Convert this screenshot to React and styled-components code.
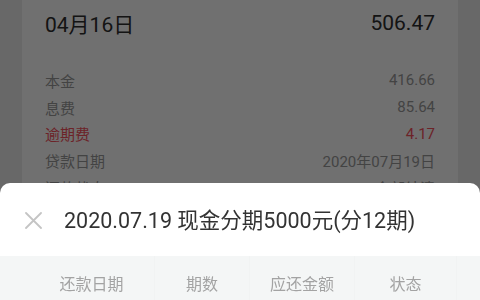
import React from "react";
import styled, { createGlobalStyle } from "styled-components";

const Global = createGlobalStyle`
  html, body { margin: 0; padding: 0; }
  body {
    width: 480px; height: 300px; overflow: hidden;
    background: #ececec;
    font-family: Roboto, "Noto Sans CJK SC", sans-serif;
  }
`;

const Page = styled.div`
  padding: 0 22px;
  height: 300px;
  overflow: hidden;
`;

const Card = styled.div`
  background: #ffffff;
  padding: 0 23px;
  height: 300px;
`;

const Headline = styled.div`
  display: flex;
  justify-content: space-between;
  align-items: center;
  height: 46px;
  font-size: 21px;
  font-weight: 400;
  color: #2e2e2e;
  margin-bottom: 21px;
`;

const Row = styled.div`
  display: flex;
  justify-content: space-between;
  align-items: center;
  height: 26.7px;
  font-size: 15px;
  color: ${(p) => (p.$alert ? "#f5505c" : "#9a9a9a")};
`;

const Overlay = styled.div`
  position: fixed;
  inset: 0;
  background: rgba(0, 0, 0, 0.56);
`;

const Sheet = styled.div`
  position: fixed;
  left: 0;
  right: 0;
  top: 183px;
  bottom: 0;
  background: #ffffff;
  border-radius: 10px 10px 0 0;
  overflow: hidden;
  display: flex;
  flex-direction: column;
`;

const TitleBar = styled.div`
  flex: none;
  display: flex;
  align-items: center;
  height: 73px;
  padding-left: 25px;
  gap: 22px;
`;

const Close = styled.svg`
  width: 17px;
  height: 17px;
  flex: none;
  margin-top: 2px;
`;

const Title = styled.div`
  font-size: 21.5px;
  color: #333333;
  white-space: nowrap;
  margin-top: -3px;
`;

const Header = styled.div`
  flex: none;
  display: grid;
  grid-template-columns: 126px 95px 105px 102px;
  padding-left: 29px;
  height: 54px;
  background: #f4f6f6;
`;

const HeadCell = styled.div`
  display: flex;
  align-items: center;
  justify-content: center;
  font-size: 16px;
  color: #a3a3a3;
  border-right: 1px solid #f1f3f3;
`;

const rows = [
  ["本金", "416.66"],
  ["息费", "85.64"],
  ["逾期费", "4.17", true],
  ["贷款日期", "2020年07月19日"],
  ["还款状态", "全部结清"],
];

export default function App() {
  return (
    <>
      <Global />
      <Page>
        <Card>
          <Headline>
            <span>04月16日</span>
            <span>506.47</span>
          </Headline>
          {rows.map(([l, v, a]) => (
            <Row key={l} $alert={a}>
              <span>{l}</span>
              <span>{v}</span>
            </Row>
          ))}
        </Card>
      </Page>
      <Overlay />
      <Sheet>
        <TitleBar>
          <Close viewBox="0 0 17 17">
            <path d="M1 1L16 16M16 1L1 16" stroke="#c4c4c4" strokeWidth="1.8" strokeLinecap="round" fill="none" />
          </Close>
          <Title>2020.07.19 现金分期5000元(分12期)</Title>
        </TitleBar>
        <Header>
          <HeadCell>还款日期</HeadCell>
          <HeadCell>期数</HeadCell>
          <HeadCell>应还金额</HeadCell>
          <HeadCell>状态</HeadCell>
        </Header>
      </Sheet>
    </>
  );
}
